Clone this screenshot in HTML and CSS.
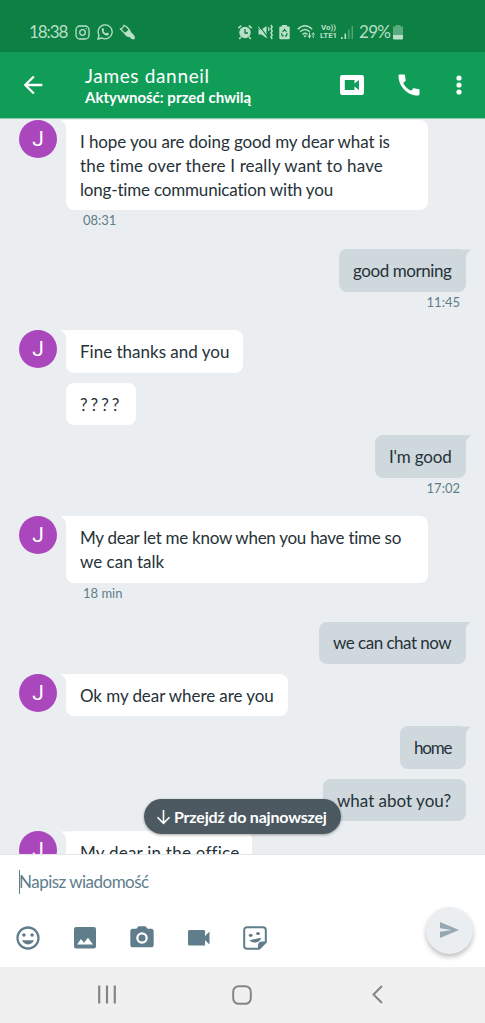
FILE: index.html
```html
<!DOCTYPE html>
<html lang="pl">
<head>
<meta charset="utf-8">
<title>James danneil</title>
<link rel="stylesheet" href="styles.css">
</head>
<body>
<div class="phone">
  <div class="status">
    <div class="status-left">
      <span class="clock">18:38</span>
      <svg class="s-insta" width="15" height="15" viewBox="0 0 15 15" fill="none" stroke="currentColor" stroke-width="1.3"><rect x="1" y="1" width="13" height="13" rx="3.8"/><circle cx="7.5" cy="7.5" r="2.8"/><circle cx="11.2" cy="3.8" r=".3" stroke-width=".8"/></svg>
      <svg class="s-wa" width="16" height="16" viewBox="0 0 16 16"><path d="M1 15l1-3.8A7 7 0 1 1 4.800 14z" fill="none" stroke="currentColor" stroke-width="1.3"/><path d="M5.300 4.200c.6-.4 1.100-.2 1.300.4l.5 1.300-.7 1c.6 1.200 1.400 2 2.700 2.600l.9-.9 1.700.8c.4.3.2 1.200-.3 1.600-1.300 1-3.100.3-4.500-.8S4.100 6.700 5.300 4.200z" fill="currentColor"/></svg>
      <svg class="s-brush" width="17" height="17" viewBox="0 0 17 17"><path d="M1.200 4.800L3.600 4 5 1.300l2.500 1.500L10.500 6 6 9.600z" fill="none" stroke="currentColor" stroke-width="1.300" stroke-linejoin="round"/><path d="M5.200 9.700l5.500-4.200 1.800 3.300c2.700 2 4 4.500 3.200 6-1.200 1.500-3.700.2-5-1.700-2 .2-4-1.200-5.500-3.400z" fill="currentColor"/></svg>
    </div>
    <div class="status-right">
      <svg class="s-alarm" width="16" height="16" viewBox="0 0 16 16"><circle cx="8" cy="8.500" r="5.700" fill="currentColor"/><path d="M1.300 4.200l3-2.600M14.700 4.200l-3-2.600M4 13l-1.800 1.900M12 13l1.800 1.900" stroke="currentColor" stroke-width="1.600"/><path d="M8 5v4h3" fill="none" stroke="#0d8043" stroke-width="1.300"/></svg>
      <svg class="s-mute" width="15" height="16" viewBox="0 0 15 16"><path d="M.5 5.500h3L8.500 2v12l-5-3.500h-3z" fill="currentColor"/><path d="M1 1.500l9 12" stroke="#0d8043" stroke-width="1.200"/><path d="M0 2.500l9 11.500" stroke="currentColor" stroke-width="1"/><path d="M13 1l1.200 2L13 5l1.200 2L13 9l1.200 2-1.200 2 1.200 2" fill="none" stroke="currentColor" stroke-width="1.500"/><path d="M10.700 3v4" stroke="currentColor" stroke-width="1.200"/></svg>
      <svg class="s-saver" width="11" height="16" viewBox="0 0 11 16"><path d="M3 1h5v1.500h1.500A1.200 1.200 0 0 1 10.700 4v10a1.200 1.200 0 0 1-1.200 1.200h-8A1.200 1.200 0 0 1 .3 14V4a1.200 1.200 0 0 1 1.200-1.500H3z" fill="currentColor"/><path d="M3.500 8l2-2.500 2 2.500M8.300 9.300l-1 2.500H5.800M2.500 9.300l.8 2.500h1.300" fill="none" stroke="#0d8043" stroke-width="1.200"/></svg>
      <svg class="s-wifi" width="18" height="16" viewBox="0 0 18 16"><path d="M.8 5.200q7.200-7 14.400 0M3.200 7.800q4.800-4.600 9.600 0M5.500 10.400q2.500-2.300 5 0" fill="none" stroke="currentColor" stroke-width="1.400"/><path d="M6.500 12l1.500-1 1.500 1L8 13.600zM10.500 11.500h4l-2 3zM14.500 11h3.500l-1.800-3zM12 8.500h1v4h-1zM15.700 10h1v4h-1z" fill="currentColor"/></svg>
      <span class="volte"><span>Vo))</span><span>LTE1</span></span>
      <svg class="s-signal" width="13" height="15" viewBox="0 0 13 15" fill="currentColor"><path d="M0 12h1.600v2H0zM3.500 8.500h1.600V14H3.500z"/><path d="M7 4.500h1.600V14H7zM10.500 1H12v13h-1.500z" opacity=".4"/></svg>
      <span class="percent">29%</span>
      <svg class="s-batt" width="10" height="15" viewBox="0 0 10 15" fill="currentColor"><path d="M2.500 0h5v1.500H9a1 1 0 0 1 1 1V10H0V2.500a1 1 0 0 1 1-1h1.500z" opacity=".45"/><path d="M0 10h10v3.500a1 1 0 0 1-1 1H1a1 1 0 0 1-1-1z"/></svg>
    </div>
  </div>

  <header class="appbar">
    <svg class="back" width="28" height="28" viewBox="0 0 24 24" fill="currentColor"><path d="M20 11H7.830l5.590-5.590L12 4l-8 8 8 8 1.410-1.410L7.830 13H20z"/></svg>
    <div class="titles">
      <div class="name">James danneil</div>
      <div class="activity">Aktywność: przed chwilą</div>
    </div>
    <svg class="duo" width="24" height="20" viewBox="0 0 24 20"><rect width="24" height="20" rx="2.200" fill="currentColor"/><path d="M4.800 5h9.700v3.400L19 5v10l-4.500-3.400V15H4.800z" fill="#0f9d58"/></svg>
    <svg class="call" width="28" height="28" viewBox="0 0 24 24" fill="currentColor"><path d="M20.010 15.380c-1.230 0-2.420-.2-3.530-.56-.35-.12-.74-.03-1.010.24l-1.570 1.970c-2.830-1.350-5.480-3.900-6.890-6.830l1.950-1.660c.27-.28.35-.67.24-1.020-.37-1.110-.56-2.300-.56-3.530 0-.54-.45-.99-.99-.99H4.190C3.650 3 3 3.240 3 3.990 3 13.280 10.730 21 20.010 21c.71 0 .99-.63.99-1.180v-3.450c0-.54-.45-.99-.99-.99z"/></svg>
    <svg class="more" width="6" height="20" viewBox="0 0 6 20" fill="currentColor"><circle cx="3" cy="3" r="2.600"/><circle cx="3" cy="10" r="2.600"/><circle cx="3" cy="17" r="2.600"/></svg>
  </header>

  <main class="chat">
    <div class="row in gap-first"><div class="avatar">J</div><div class="bubble tail w-hope"><p class="line-hope">I hope you are doing good my dear what is</p><p class="line-time">the time over there I really want to have</p><p class="line-long">long-time communication with you</p></div></div>
    <div class="time in-time">08:31</div>
    <div class="row out gap-large"><div class="bubble tail w-morning">good morning</div></div>
    <div class="time out-time">11:45</div>
    <div class="row in gap-medium"><div class="avatar">J</div><div class="bubble tail w-fine">Fine thanks and you</div></div>
    <div class="row in follow"><div class="bubble w-question">????</div></div>
    <div class="row out"><div class="bubble tail w-good">I'm good</div></div>
    <div class="time out-time">17:02</div>
    <div class="row in gap-medium"><div class="avatar">J</div><div class="bubble tail w-know"><p class="line-know">My dear let me know when you have time so</p><p>we can talk</p></div></div>
    <div class="time in-time">18 min</div>
    <div class="row out gap-large"><div class="bubble tail w-chat">we can chat now</div></div>
    <div class="row in"><div class="avatar">J</div><div class="bubble tail w-where">Ok my dear where are you</div></div>
    <div class="row out"><div class="bubble tail w-home">home</div></div>
    <div class="row out"><div class="bubble w-what">what abot you?</div></div>
    <div class="row in"><div class="avatar">J</div><div class="bubble tail w-office">My dear in the office</div></div>
    <div class="jump"><svg width="15" height="16" viewBox="0 0 15 16" fill="none" stroke="currentColor" stroke-width="1.600"><path d="M7.500 1v13M1.500 8.300l6 6 6-6"/></svg><span>Przejdź do najnowszej</span></div>
  </main>

  <section class="composer">
    <div class="input"><span>Napisz wiadomość</span></div>
    <div class="tools">
      <svg class="i-smile" width="28" height="28" viewBox="0 0 24 24" fill="currentColor"><path d="M11.990 2C6.470 2 2 6.480 2 12s4.470 10 9.990 10C17.520 22 22 17.520 22 12S17.520 2 11.990 2zM12 20c-4.420 0-8-3.580-8-8s3.580-8 8-8 8 3.580 8 8-3.580 8-8 8zm3.500-9c.83 0 1.500-.67 1.500-1.500S16.330 8 15.500 8 14 8.670 14 9.500s.67 1.500 1.500 1.500zm-7 0c.83 0 1.500-.67 1.500-1.500S9.330 8 8.500 8 7 8.670 7 9.500 7.670 11 8.500 11zm3.500 6.500c2.330 0 4.310-1.460 5.110-3.500H6.890c.8 2.040 2.780 3.500 5.110 3.500z"/></svg>
      <svg class="i-image" width="22" height="22" viewBox="0 0 22 22"><rect width="22" height="21.500" rx="2.200" fill="currentColor"/><path d="M3 17.500l4-5.500 3 3.700 4-5 5 6.800z" fill="#fff"/></svg>
      <svg class="i-camera" width="28" height="28" viewBox="0 0 24 24"><path d="M9 2L7.170 4H4c-1.100 0-2 .9-2 2v12c0 1.100.9 2 2 2h16c1.100 0 2-.9 2-2V6c0-1.100-.9-2-2-2h-3.170L15 2z" fill="currentColor"/><circle cx="12" cy="12" r="4" fill="none" stroke="#fff" stroke-width="1.900"/></svg>
      <svg class="i-video" width="22" height="16" viewBox="0 0 22 16"><path d="M1.500 0h14A1.300 1.300 0 0 1 17 1.400V6l4.500-4.500v13L17 10v4.200a1.300 1.300 0 0 1-1.500 1.400h-14A1.400 1.400 0 0 1 0 14.200V1.400A1.400 1.400 0 0 1 1.500 0z" fill="currentColor"/></svg>
      <svg class="i-sticker" width="24" height="24" viewBox="0 0 24 24"><path d="M4 1.200h16A2.800 2.800 0 0 1 22.800 4v12L16 22.800H4A2.800 2.800 0 0 1 1.200 20V4A2.800 2.800 0 0 1 4 1.200z" fill="none" stroke="currentColor" stroke-width="2"/><path d="M15 23v-3.500c0-2.500 1.500-4 4-4h4v1L17 23z" fill="currentColor"/><path d="M6.500 14.200L18 11.700c-.4 5-8 6.500-11.500 2.500z" fill="currentColor"/><ellipse cx="7.700" cy="9.300" rx="1.900" ry="1.600" fill="currentColor"/><ellipse cx="15" cy="7.500" rx="1.900" ry="1.600" fill="currentColor"/></svg>
    </div>
    <div class="send"><svg width="19" height="16" viewBox="0 0 19 16"><path d="M0 0l19 8-19 8V9.700L12 8 0 6.300z" fill="currentColor"/></svg></div>
  </section>

  <nav class="navbar">
    <svg class="n-recent" width="18" height="19" viewBox="0 0 18 19" stroke="currentColor" stroke-width="2.200"><path d="M1.200.5v18M9 .5v18M16.800.5v18"/></svg>
    <svg class="n-home" width="20" height="20" viewBox="0 0 20 20" fill="none" stroke="currentColor" stroke-width="2"><rect x="1.200" y="1.200" width="17.600" height="17.600" rx="5.500"/></svg>
    <svg class="n-back" width="11" height="19" viewBox="0 0 11 19" fill="none" stroke="currentColor" stroke-width="2"><path d="M10 1L1.500 9.500 10 18"/></svg>
  </nav>
</div>
</body>
</html>
```
FILE: styles.css
```css
* { box-sizing: border-box; }
body { margin: 0; background: #fff; font-family: Lato, "Noto Sans", sans-serif; font-variant-ligatures: none; }
p { margin: 0; }
svg { display: block; flex: none; }

.phone { width: 485px; height: 1023px; display: flex; flex-direction: column; overflow: hidden; }

.status { height: 52px; background: #0d8043; color: #b9dfc9; display: flex; justify-content: space-between; align-items: flex-start; padding: 24px 82px 0 29px; }
.status-left, .status-right { display: flex; align-items: center; height: 16px; white-space: nowrap; }
.clock { font-size: 17px; line-height: 16px; width: 46px; letter-spacing: -1.100px; }
.s-wa { margin-left: 7px; }
.s-brush { margin-left: 6px; }
.s-mute { margin-left: 5px; }
.s-saver { margin-left: 6px; }
.s-wifi { margin-left: 7px; }
.volte { display: flex; flex-direction: column; width: 19px; margin-left: 4px; font: bold 8px/8px Roboto, sans-serif; letter-spacing: -.1px; text-align: center; }
.s-signal { margin-left: 3px; }
.percent { width: 33px; margin-left: 5px; font-size: 17px; line-height: 16px; letter-spacing: -.7px; }
.s-batt { margin-left: 1px; }

.appbar { height: 67px; flex: none; background: #0f9d58; border-bottom: 1px solid #8cc9ab; color: #fff; display: flex; align-items: center; padding: 0 23px 0 19px; }
.titles { margin-left: 38px; flex: 1; white-space: nowrap; }
.name { font-size: 19px; line-height: 24px; letter-spacing: .65px; }
.activity { font-size: 15px; line-height: 18px; font-weight: 700; }
.call { margin-left: 31px; }
.more { margin-left: 33px; }

.chat { position: relative; height: 734.5px; flex: none; overflow: hidden; background: #eaeef1; color: #263238; }
.row { display: flex; align-items: flex-start; margin-top: 10px; }
.in { padding-left: 19px; }
.out { justify-content: flex-end; padding-right: 19px; }
.gap-first { margin-top: 1px; }
.gap-medium { margin-top: 16.300px; }
.gap-large { margin-top: 17px; }
.follow { padding-left: 66px; }
.avatar { width: 38px; height: 38px; border-radius: 50%; background: #ab47bc; color: #fff; font: 21px/38px Roboto, sans-serif; text-align: center; margin-right: 9px; }
.bubble { position: relative; padding: 9.900px 14px 8.600px; border-radius: 8px; font-size: 17px; line-height: 24px; white-space: nowrap; }
.in .bubble { background: #fff; }
.out .bubble { background: #cfd8dd; }
.tail::before { content: ""; position: absolute; top: 0; width: 14px; height: 10px; background: inherit; }
.in .tail::before { left: -5px; clip-path: polygon(0 0, 100% 0, 100% 100%, 5px 100%, 5px 7px, 4px 4px); }
.out .tail::before { right: -5px; clip-path: polygon(0 0, 100% 0, 10px 4px, 9px 7px, 9px 100%, 0 100%); }
.time { height: 22px; font-size: 13px; line-height: 21px; color: #607d8b; }
.in-time { padding-left: 83px; }
.out-time { padding-right: 25px; text-align: right; }

.w-hope { width: 362px; }
.line-hope { letter-spacing: -.11px; }
.line-time { letter-spacing: .15px; }
.line-long { letter-spacing: -.18px; }
.w-morning { width: 127px; letter-spacing: -.42px; }
.w-fine { width: 177px; }
.w-question { width: 70px; letter-spacing: 3px; }
.w-good { width: 91px; letter-spacing: -.2px; }
.w-know { width: 362px; }
.line-know { letter-spacing: -.27px; }
.w-chat { width: 147px; letter-spacing: -.5px; }
.w-where { width: 222px; letter-spacing: -.08px; }
.w-home { width: 66px; letter-spacing: -1.200px; }
.w-what { width: 143px; }
.w-office { width: 186px; letter-spacing: .23px; }

.jump { position: absolute; left: 144px; top: 680px; width: 197px; height: 35px; border-radius: 18px; background: rgba(63, 78, 86, .93); color: #fff; display: flex; align-items: center; padding-left: 12px; gap: 3px; font-size: 16px; font-weight: 700; letter-spacing: -.2px; white-space: nowrap; box-shadow: 0 1px 3px rgba(0, 0, 0, .35); }

.composer { position: relative; flex: 1; background: #fff; color: #607d8b; padding: 15px 19px 0; border-top: 1px solid #e4e7e9; }
.input { height: 24px; border-left: 1px solid #607d8b; font-size: 17px; line-height: 24px; letter-spacing: -.52px; }
.input span { margin-left: -1px; }
.tools { display: flex; align-items: center; height: 28px; margin: 30px 0 0 -5px; }
.i-image { margin-left: 32px; }
.i-camera { margin-left: 32px; }
.i-video { margin-left: 32px; }
.i-sticker { margin-left: 33px; }
.send { position: absolute; left: 426px; top: 52px; width: 47px; height: 47px; border-radius: 50%; background: #eaeef1; color: #96a8b1; display: flex; align-items: center; justify-content: center; box-shadow: 0 3px 5px rgba(0, 0, 0, .25); }

.navbar { height: 56.500px; flex: none; background: #f0f0f0; color: #858585; display: flex; align-items: center; padding-left: 98px; }
.n-home { margin-left: 116px; }
.n-back { margin-left: 120px; }
```
